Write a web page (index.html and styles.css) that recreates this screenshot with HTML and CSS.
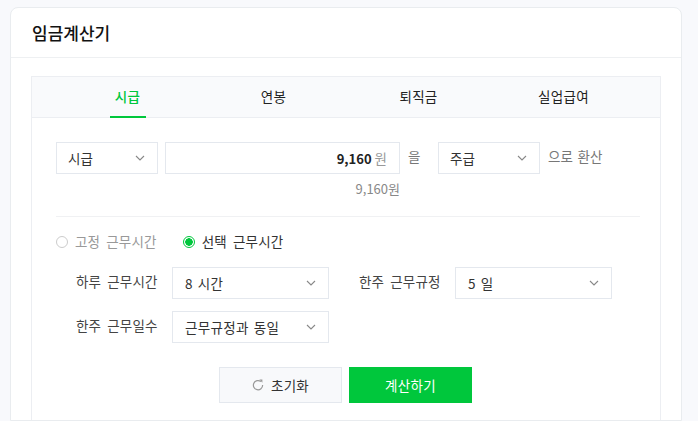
FILE: index.html

```html
<!DOCTYPE html>
<html lang="ko">

<head>
  <meta charset="UTF-8">
  <title>임금계산기</title>
  <link rel="stylesheet" href="styles.css">
</head>

<body>

  <div class="card">
    <h2 class="card-title">임금계산기</h2>

    <div class="card-body">
      <div class="calc-box">
        <div class="tabs">
          <a class="tab active">시급</a>
          <a class="tab">연봉</a>
          <a class="tab">퇴직금</a>
          <a class="tab">실업급여</a>
        </div>

        <div class="calc-content">
          <div class="convert-row">
            <div class="select pay-type">
              <span>시급</span>
              <svg class="arrow" viewBox="0 0 10 6"><path d="M1 1l4 4 4-4"/></svg>
            </div>
            <div class="amount-input">
              <b>9,160</b><span class="unit">원</span>
            </div>
            <span class="word word-eul">을</span>
            <div class="select pay-type">
              <span>주급</span>
              <svg class="arrow" viewBox="0 0 10 6"><path d="M1 1l4 4 4-4"/></svg>
            </div>
            <span class="word">으로 환산</span>
          </div>
          <p class="amount-text">9,160원</p>

          <div class="radio-row">
            <label class="radio disabled"><i class="dot"></i>고정 근무시간</label>
            <label class="radio checked"><i class="dot"></i>선택 근무시간</label>
          </div>

          <div class="field-row">
            <div class="field">
              <span class="field-label">하루 근무시간</span>
              <div class="select wide">
                <span>8 시간</span>
                <svg class="arrow" viewBox="0 0 10 6"><path d="M1 1l4 4 4-4"/></svg>
              </div>
            </div>
            <div class="field">
              <span class="field-label">한주 근무규정</span>
              <div class="select wide">
                <span>5 일</span>
                <svg class="arrow" viewBox="0 0 10 6"><path d="M1 1l4 4 4-4"/></svg>
              </div>
            </div>
          </div>

          <div class="field-row">
            <div class="field">
              <span class="field-label">한주 근무일수</span>
              <div class="select wide">
                <span>근무규정과 동일</span>
                <svg class="arrow" viewBox="0 0 10 6"><path d="M1 1l4 4 4-4"/></svg>
              </div>
            </div>
          </div>

          <div class="button-group">
            <button type="button" class="btn btn-reset">
              <svg class="reset-icon" viewBox="0 0 12 12"><path d="M8.9 2.6A4.6 4.6 0 1 0 10.6 6"/><path class="tip" d="M7.4 .6l3 0 0 3.2z"/></svg>
              초기화
            </button>
            <button type="button" class="btn btn-submit">계산하기</button>
          </div>
        </div>
      </div>
    </div>
  </div>

</body>

</html>
```

FILE: styles.css

```css
* {
  box-sizing: border-box;
}

html,
body {
  height: 421px;
  overflow: hidden;
}

body {
  margin: 0;
  padding: 7px 16px 0 10px;
  background: #f8f9fc;
  font-family: "Noto Sans CJK KR", "Noto Sans", sans-serif;
  font-size: 13.5px;
  color: #333;
}

.card {
  background: #fff;
  border: 1px solid #e9ecef;
  border-radius: 8px 8px 0 0;
  height: 414px;
  overflow: hidden;
}

.card-title {
  margin: 0;
  height: 50px;
  padding: 0 21px;
  border-bottom: 1px solid #eef0f2;
  font-size: 17px;
  font-weight: 500;
  line-height: 50px;
  color: #111;
}

.card-body {
  padding: 18px 20px 0;
}

.calc-box {
  border: 1px solid #eceef2;
  height: 400px;
}

.tabs {
  display: grid;
  grid-template-columns: repeat(4, 145px);
  height: 41px;
  padding: 0 24px;
  background: #f9fafc;
  border-bottom: 1px solid #eceef2;
}

.tab {
  position: relative;
  text-align: center;
  line-height: 39px;
  letter-spacing: .3px;
  color: #222;
}

.tab.active {
  margin-right: 2px;
  color: #00c73c;
  font-weight: 500;
}

.tab.active::after {
  content: "";
  position: absolute;
  left: 50%;
  bottom: -1px;
  width: 36px;
  height: 2px;
  margin-left: -18px;
  background: #00c73c;
}

.calc-content {
  padding: 24px 20px 0 24px;
}

.convert-row {
  display: flex;
  align-items: flex-start;
}

.select {
  display: flex;
  align-items: center;
  justify-content: space-between;
  height: 32px;
  border: 1px solid #e4e8ee;
  background: #fff;
  padding: 0 12px 0 11px;
  color: #333;
}

.pay-type {
  width: 102px;
}

.wide {
  width: 157px;
  padding-left: 12px;
  letter-spacing: .3px;
  word-spacing: 1px;
}

.arrow {
  width: 10px;
  height: 6px;
  fill: none;
  stroke: #888;
  stroke-width: 1.1;
}

.amount-input {
  width: 235px;
  height: 32px;
  margin: 0 8px 0 7px;
  padding-right: 12px;
  border: 1px solid #e4e8ee;
  line-height: 30px;
  text-align: right;
  color: #222;
}

.amount-input b {
  font-size: 13px;
  font-weight: 700;
}

.unit {
  margin-left: 3px;
  color: #999;
}

.word {
  margin-left: 8px;
  line-height: 29px;
  word-spacing: 1px;
  color: #777;
}

.word-eul {
  width: 30px;
  margin-left: 0;
}

.amount-text {
  margin: 6px 0 0;
  width: 344px;
  text-align: right;
  font-size: 13px;
  line-height: 18px;
  color: #888;
}

.radio-row {
  display: flex;
  gap: 26px;
  margin-top: 18px;
  padding-top: 15px;
  padding-bottom: 1px;
  border-top: 1px solid #f0f1f3;
  line-height: 18px;
  word-spacing: 2px;
  letter-spacing: .2px;
}

.radio {
  display: flex;
  align-items: center;
  gap: 7px;
}

.radio.disabled {
  color: #999;
}

.dot {
  position: relative;
  top: 1px;
  width: 12px;
  height: 12px;
  border-radius: 50%;
  border: 1px solid #ccc;
  background: #fff;
}

.radio.checked .dot {
  border-color: #00c73c;
  background: radial-gradient(circle, #00c73c 0 3.5px, #fff 4px);
}

.field-row {
  display: flex;
  gap: 30px;
  margin-top: 12px;
  padding-left: 20px;
}

.radio-row + .field-row {
  margin-top: 16px;
}

.field {
  display: flex;
  align-items: flex-start;
}

.field-label {
  width: 96px;
  line-height: 29px;
  word-spacing: 2px;
  letter-spacing: .2px;
  color: #444;
}

.button-group {
  display: flex;
  gap: 7px;
  margin: 24px 0 0 163px;
}

.btn {
  display: flex;
  align-items: center;
  justify-content: center;
  gap: 7px;
  width: 123px;
  height: 36px;
  border: 1px solid #e4e8ee;
  font-family: inherit;
  font-size: 13.5px;
  letter-spacing: .3px;
  cursor: pointer;
}

.btn-reset {
  background: #f8f9fb;
  color: #333;
}

.btn-submit {
  border-color: #00c73c;
  background: #00c73c;
  color: #fff;
}

.reset-icon {
  width: 12px;
  height: 12px;
  fill: none;
  stroke: #999;
  stroke-width: 1.2;
}

.reset-icon .tip {
  fill: #999;
  stroke: none;
}
```
